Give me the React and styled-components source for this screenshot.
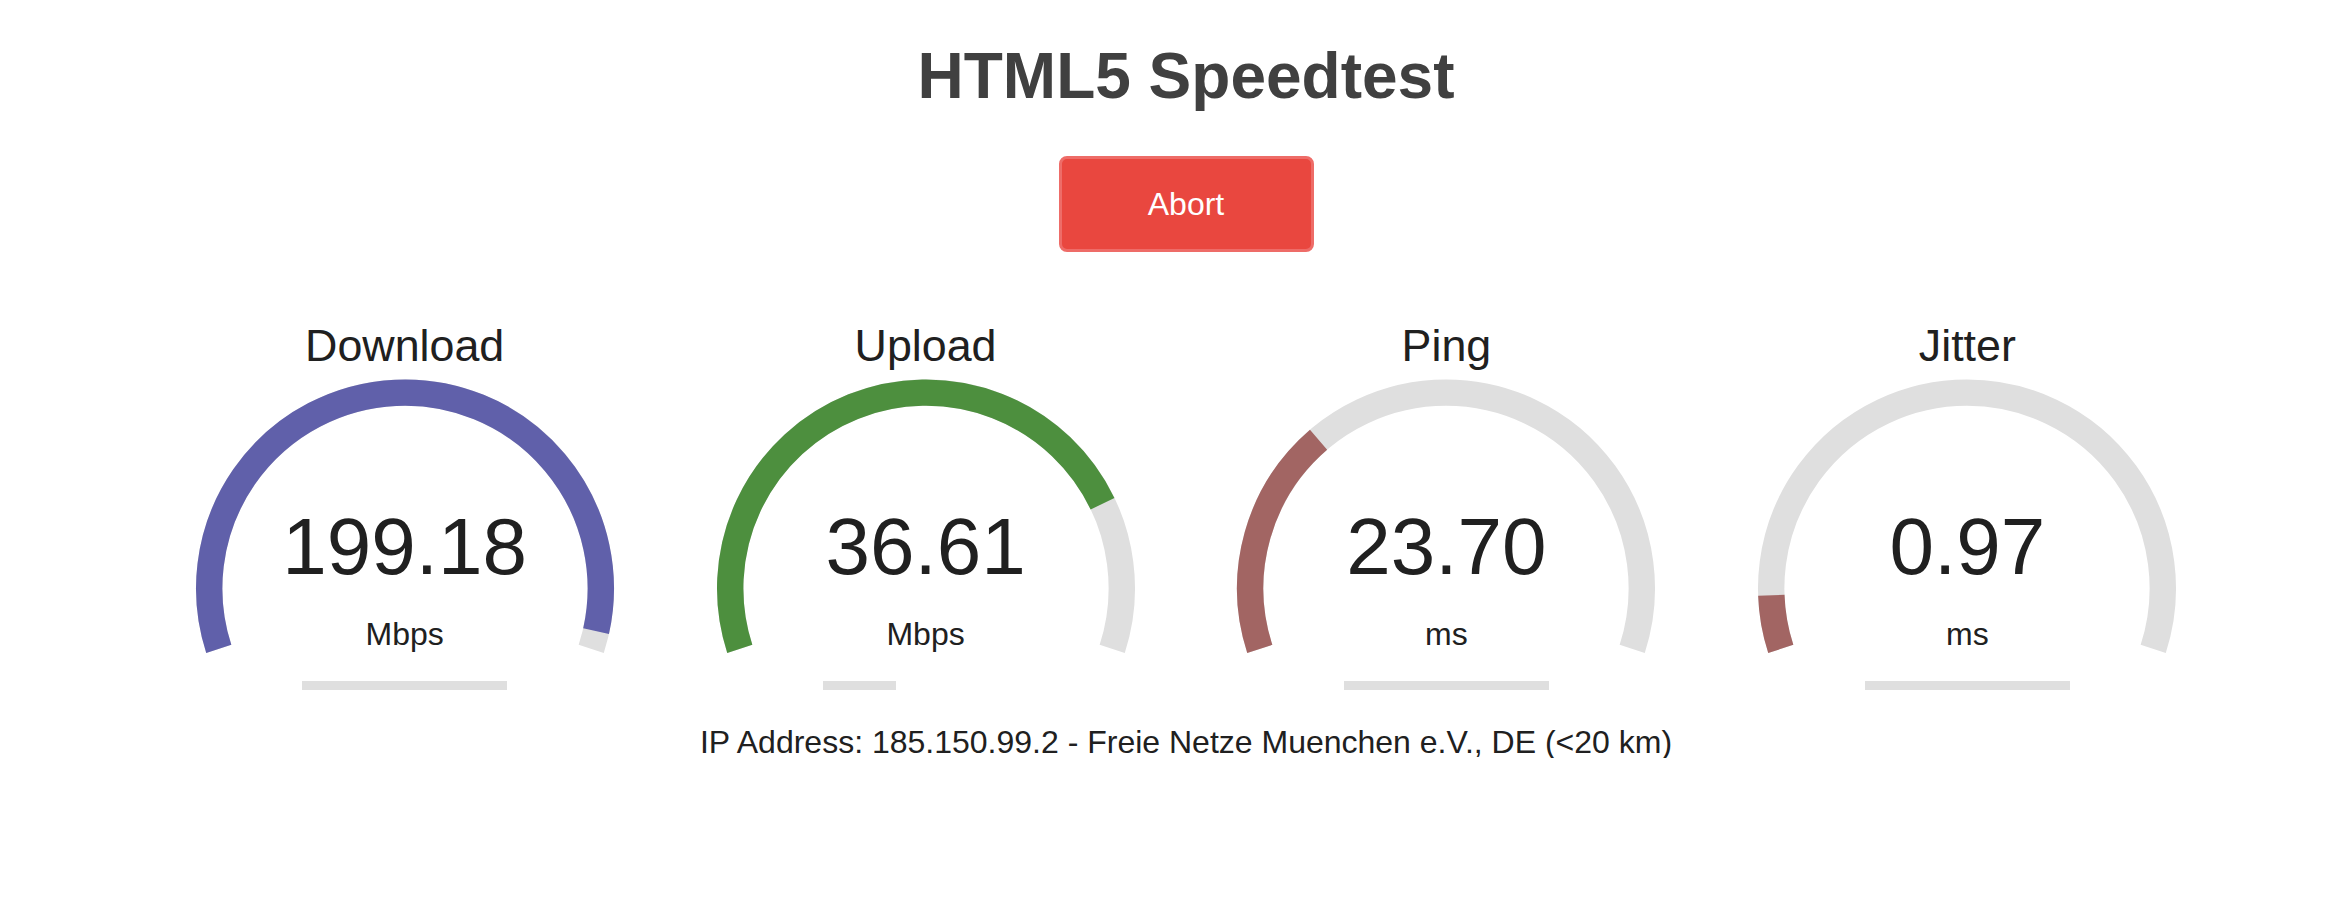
import React from 'react';
import styled, {createGlobalStyle} from 'styled-components';

const GlobalStyle = createGlobalStyle`
  html, body {
    margin: 0;
    padding: 0;
    background: #FFFFFF;
  }
  body {
    font-family: "Liberation Sans", Arial, Helvetica, sans-serif;
    color: #202020;
  }
`;

const Page = styled.div`
  padding: 39px 0 0 20px;
  display: flex;
  flex-direction: column;
  align-items: center;
  font-size: 32px;
`;

const Title = styled.h1`
  margin: 0;
  font-size: 64px;
  line-height: 74px;
  font-weight: bold;
  color: #404040;
`;

const AbortButton = styled.button`
  margin-top: 43px;
  width: 255px;
  height: 96px;
  box-sizing: border-box;
  background: #E9473F;
  border: 3px solid #EE6C68;
  border-radius: 8px;
  color: #FFFFFF;
  font-family: "Liberation Sans", Arial, Helvetica, sans-serif;
  font-size: 32px;
  cursor: pointer;
`;

const Gauges = styled.div`
  margin-top: 64px;
  display: flex;
  gap: 8.9px;
`;

const Card = styled.div`
  width: 512px;
  height: 400px;
  display: grid;
  > * { grid-area: 1 / 1; }
`;

const Meter = styled.svg`
  width: 512px;
  height: 400px;
`;

const Info = styled.div`
  display: flex;
  flex-direction: column;
  align-items: center;
  text-align: center;
`;

const Name = styled.div`
  margin-top: 7px;
  font-size: 44.8px;
  line-height: 44.8px;
`;

const Value = styled.div`
  margin-top: 139.5px;
  font-size: 80px;
  line-height: 80px;
`;

const Unit = styled.div`
  margin-top: 30.5px;
  font-size: 32px;
  line-height: 32px;
`;

const Track = styled.div`
  align-self: flex-start;
  margin: 31px 0 0 30%;
  width: 40%;
  height: 8.8px;
`;

const Fill = styled.div`
  height: 100%;
  background: #DFDFDF;
`;

const IpLine = styled.div`
  font-size: 32px;
  line-height: 32px;
  margin-top: 10px;
`;

const CX = 256, CY = 272.4, R = 195.8, LW = 26.4;

function arcPath (frac) {
  const a0 = -Math.PI * 1.1;
  const a1 = a0 + frac * Math.PI * 1.2;
  const x0 = CX + R * Math.cos(a0), y0 = CY + R * Math.sin(a0);
  const x1 = CX + R * Math.cos(a1), y1 = CY + R * Math.sin(a1);
  const large = frac * 216 > 180 ? 1 : 0;
  return `M ${x0} ${y0} A ${R} ${R} 0 ${large} 1 ${x1} ${y1}`;
}

function Gauge ({name, value, unit, amount, color, progress}) {
  return (
    <Card>
      <Meter viewBox="0 0 512 400">
        <path d={arcPath(1)} fill="none" stroke="#DFDFDF" strokeWidth={LW} />
        <path d={arcPath(amount)} fill="none" stroke={color} strokeWidth={LW} />
      </Meter>
      <Info>
        <Name>{name}</Name>
        <Value>{value}</Value>
        <Unit>{unit}</Unit>
        <Track>
          <Fill style={{width: `${progress * 100}%`}} />
        </Track>
      </Info>
    </Card>
  );
}

const tests = [
  {name: 'Download', value: '199.18', unit: 'Mbps', amount: 0.975, color: '#6060AA', progress: 1},
  {name: 'Upload', value: '36.61', unit: 'Mbps', amount: 0.798, color: '#4D8F3E', progress: 0.356},
  {name: 'Ping', value: '23.70', unit: 'ms', amount: 0.312, color: '#A26563', progress: 1},
  {name: 'Jitter', value: '0.97', unit: 'ms', amount: 0.074, color: '#A26563', progress: 1},
];

export default function App () {
  return (
    <Page>
      <GlobalStyle />
      <Title>HTML5 Speedtest</Title>
      <AbortButton>Abort</AbortButton>
      <Gauges>
        {tests.map(t => <Gauge key={t.name} {...t} />)}
      </Gauges>
      <IpLine>IP Address: 185.150.99.2 - Freie Netze Muenchen e.V., DE (&lt;20 km)</IpLine>
    </Page>
  );
}
